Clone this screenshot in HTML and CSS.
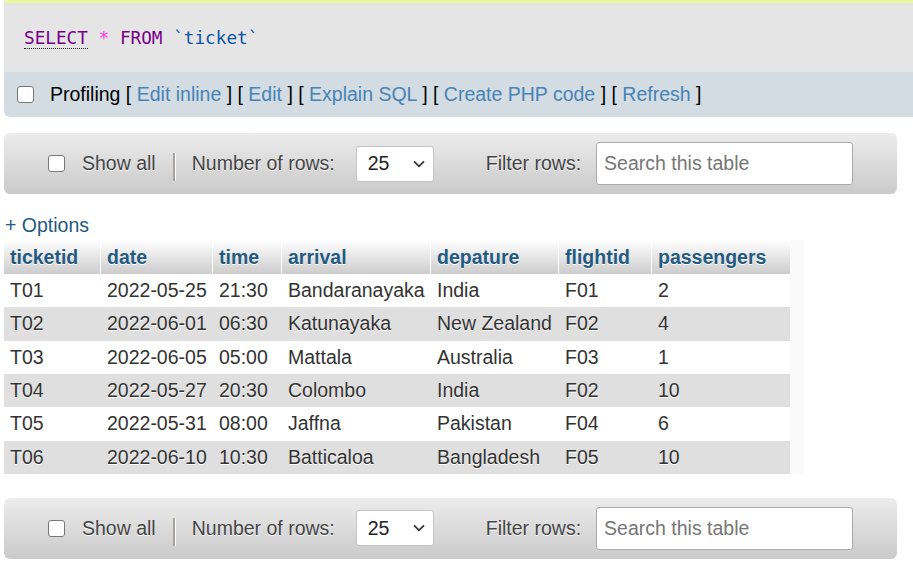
FILE: index.html
```html
<!DOCTYPE html>
<html lang="en">
<head>
<meta charset="utf-8">
<title>ticket</title>
<link rel="stylesheet" href="styles.css">
</head>
<body>
<div class="page">
  <div class="strip"></div>
  <div class="sqlbox">
    <code class="sql"><span class="kw doc">SELECT</span> <span class="op">*</span> <span class="kw">FROM</span> <span class="ident">`ticket`</span></code>
  </div>
  <div class="tools">
    <input type="checkbox" class="cb">
    <span class="tooltext">Profiling [ <a href="#">Edit inline</a> ] [ <a href="#">Edit</a> ] [ <a href="#">Explain SQL</a> ] [ <a href="#">Create PHP code</a> ] [ <a href="#">Refresh</a> ]</span>
  </div>

  <div class="navbar nav-top">
    <input type="checkbox" class="cb">
    <span class="lbl lbl-show">Show all</span>
    <span class="sep"></span>
    <span class="lbl lbl-rows">Number of rows:</span>
    <div class="select"><span class="sel-val">25</span><svg class="chev" width="12" height="8" viewBox="0 0 12 8"><path d="M1 1.3 L6 6.3 L11 1.3" fill="none" stroke="#333" stroke-width="1.8"/></svg></div>
    <span class="lbl lbl-filter">Filter rows:</span>
    <input class="search" type="text" placeholder="Search this table">
  </div>

  <div class="options"><a href="#">+ Options</a></div>

  <table class="data">
    <colgroup>
      <col class="w1"><col class="w2"><col class="w3"><col class="w4"><col class="w5"><col class="w6"><col class="w7"><col class="wg">
    </colgroup>
    <thead>
      <tr><th>ticketid</th><th>date</th><th>time</th><th>arrival</th><th>depature</th><th>flightid</th><th class="last">passengers</th><th class="ghost"></th></tr>
    </thead>
    <tbody>
      <tr class="odd"><td>T01</td><td>2022-05-25</td><td>21:30</td><td>Bandaranayaka</td><td>India</td><td>F01</td><td>2</td><td class="ghost"></td></tr>
      <tr class="even"><td>T02</td><td>2022-06-01</td><td>06:30</td><td>Katunayaka</td><td>New Zealand</td><td>F02</td><td>4</td><td class="ghost"></td></tr>
      <tr class="odd"><td>T03</td><td>2022-06-05</td><td>05:00</td><td>Mattala</td><td>Australia</td><td>F03</td><td>1</td><td class="ghost"></td></tr>
      <tr class="even"><td>T04</td><td>2022-05-27</td><td>20:30</td><td>Colombo</td><td>India</td><td>F02</td><td>10</td><td class="ghost"></td></tr>
      <tr class="odd"><td>T05</td><td>2022-05-31</td><td>08:00</td><td>Jaffna</td><td>Pakistan</td><td>F04</td><td>6</td><td class="ghost"></td></tr>
      <tr class="even"><td>T06</td><td>2022-06-10</td><td>10:30</td><td>Batticaloa</td><td>Bangladesh</td><td>F05</td><td>10</td><td class="ghost"></td></tr>
    </tbody>
  </table>

  <div class="navbar nav-bottom">
    <input type="checkbox" class="cb">
    <span class="lbl lbl-show">Show all</span>
    <span class="sep"></span>
    <span class="lbl lbl-rows">Number of rows:</span>
    <div class="select"><span class="sel-val">25</span><svg class="chev" width="12" height="8" viewBox="0 0 12 8"><path d="M1 1.3 L6 6.3 L11 1.3" fill="none" stroke="#333" stroke-width="1.8"/></svg></div>
    <span class="lbl lbl-filter">Filter rows:</span>
    <input class="search" type="text" placeholder="Search this table">
  </div>
</div>
</body>
</html>
```

FILE: styles.css
```css
* { box-sizing: border-box; }

html, body {
  margin: 0;
  padding: 0;
  overflow: hidden;
  background: #fff;
}

body {
  font-family: "Liberation Sans", Arial, sans-serif;
  font-size: 19.5px;
  color: #333;
}

.page {
  padding-left: 4px;
}

.strip {
  height: 3px;
  background: #e9f7a0;
}

.sqlbox {
  height: 69px;
  background: #e5e5e5;
  display: flex;
  align-items: center;
  padding-left: 20px;
}

.sql {
  font-family: "DejaVu Sans Mono", "Liberation Mono", monospace;
  font-size: 17.7px;
  line-height: 24px;
  white-space: pre;
}

.kw { color: #770088; }
.doc { border-bottom: 1px dotted #222; }
.op { color: #ff33ee; }
.ident { color: #0a55a5; }

.tools {
  height: 45px;
  background: #d3dce3;
  border-bottom-left-radius: 6px;
  display: flex;
  align-items: center;
  padding-left: 13px;
  color: #000;
  white-space: nowrap;
}

.tools .cb {
  margin-right: 16px;
}

.tooltext a {
  color: #4783b4;
  text-decoration: none;
}

.cb {
  appearance: none;
  -webkit-appearance: none;
  margin: 0;
  width: 17px;
  height: 17px;
  border: 1.5px solid #767676;
  border-radius: 3px;
  background: #fff;
  flex: none;
}

.navbar {
  height: 61px;
  margin-right: 16px;
  border-radius: 6px;
  background: linear-gradient(#ececec, #cacaca);
  display: flex;
  align-items: center;
  padding-left: 44px;
  color: #444;
  white-space: nowrap;
}

.nav-top { margin-top: 16px; }
.nav-bottom { margin-top: 24px; }

.lbl {
  text-shadow: 0 1px 0 #fff;
}

.lbl-show { margin-left: 17px; }

.sep {
  width: 2px;
  height: 28px;
  margin-left: 17px;
  margin-top: 7px;
  background: #a8a29c;
  box-shadow: 1px 0 0 #fff;
}

.lbl-rows { margin-left: 17px; }

.select {
  margin-left: 21px;
  width: 78px;
  height: 36px;
  background: #fff;
  border: 1px solid #c4c4c4;
  border-radius: 3px;
  display: flex;
  align-items: center;
  justify-content: space-between;
  padding: 0 8px 0 11px;
  color: #222;
}

.chev { display: block; }

.lbl-filter { margin-left: 52px; }

.search {
  margin-left: 15px;
  width: 257px;
  height: 43px;
  border: 1px solid #aaa;
  border-radius: 3px;
  background: #fff;
  padding: 0 7px;
  font-family: inherit;
  font-size: 19.5px;
  color: #333;
}

.search::placeholder {
  color: #767676;
}

.options {
  margin: 20px 0 3px 1px;
  line-height: 23px;
}

.options a {
  color: #235a81;
  text-decoration: none;
}

.data {
  table-layout: fixed;
  width: 799px;
  border-collapse: separate;
  border-spacing: 0;
}

.w1 { width: 97px; }
.w2 { width: 112px; }
.w3 { width: 69px; }
.w4 { width: 149px; }
.w5 { width: 128px; }
.w6 { width: 93px; }
.w7 { width: 138px; }
.wg { width: 13px; }

.data th {
  height: 34px;
  padding: 0 6px;
  text-align: left;
  vertical-align: middle;
  font-weight: bold;
  color: #235a81;
  text-shadow: 0 1px 0 #fff;
  background: linear-gradient(#fff, #cccccc);
  border-right: 1px solid #fff;
  white-space: nowrap;
  overflow: hidden;
}

.data th.last { border-right: 0; }

.data td {
  height: 33.33px;
  padding: 0 6px;
  vertical-align: middle;
  color: #333;
  text-shadow: 0 1px 0 #fff;
  white-space: nowrap;
  overflow: hidden;
}

.data tr.odd td { background: #fff; }
.data tr.even td { background: #dfdfdf; }

.data th.ghost,
.data tr td.ghost {
  background: #fafafa;
  border-right: 0;
  padding: 0;
}
```
